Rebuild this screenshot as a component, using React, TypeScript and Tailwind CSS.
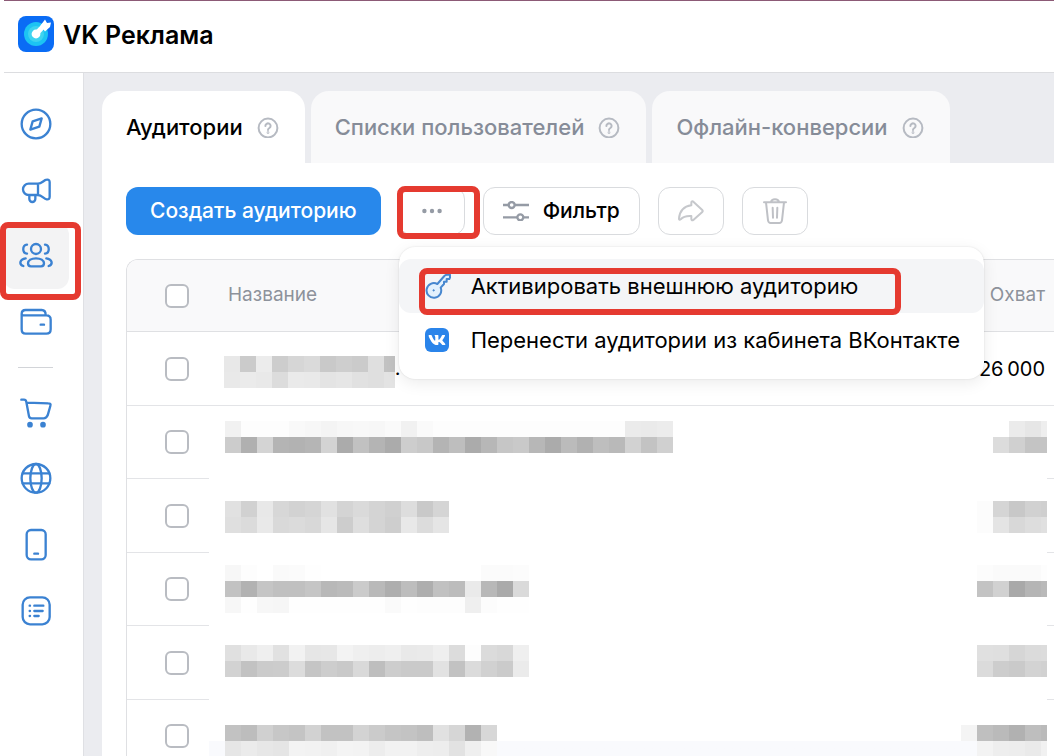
import type { ReactNode } from 'react';
import { clsx } from 'clsx';
import { FaVk } from 'react-icons/fa';

const navPrimary: Array<{ label: string; active?: boolean; icon: ReactNode }> = [
  {
    label: 'Обзор',
    icon: (
      <>
        <circle cx="48" cy="48" r="43" />
        <path d="M65 31l-7 25-27 9 7-25z" />
      </>
    ),
  },
  {
    label: 'Кампании',
    icon: (
      <path d="M54 29H26a17 17 0 0 0 0 34h28M54 29v34M54 29c12 0 17-11 26-12 7-1 9 3 9 8v43c0 6-3 9-9 8-9-1-14-13-26-13M28 63v12a9 9 0 0 0 18 0V63" />
    ),
  },
  {
    label: 'Аудитории',
    active: true,
    icon: (
      <>
        <circle cx="48" cy="27" r="15" />
        <path d="M48 55c14 0 24 6 24 15 0 6-3 9-9 9H33c-6 0-9-3-9-9 0-9 10-15 24-15z" />
        <path d="M21 14C6 16 6 39 21 41M75 14c15 2 15 25 0 27M17 55C-1 58-4 73 10 78M79 55c18 3 21 18 7 23" />
      </>
    ),
  },
  {
    label: 'Бюджет',
    icon: (
      <path d="M5 24v46c0 9 4 13 12 13h62c9 0 13-4 13-13V41c0-9-4-13-13-13H14c-6 0-9-2-9-5 0-7 4-11 12-11h48c7 0 12 4 12 15M62 56h10" />
    ),
  },
];

const navSecondary: typeof navPrimary = [
  {
    label: 'Каталоги',
    icon: (
      <>
        <path d="M4 11h8c5 0 6 2 7 7l8 43c1 5 3 6 8 6h36c6 0 9-2 12-9l8-28c2-6 0-8-6-8L20 20" />
        <circle cx="30" cy="86" r="5" fill="currentColor" />
        <circle cx="69" cy="86" r="5" fill="currentColor" />
      </>
    ),
  },
  {
    label: 'Сайты',
    icon: (
      <>
        <circle cx="48" cy="49" r="43" />
        <ellipse cx="48" cy="49" rx="17" ry="43" />
        <path d="M8 34h80M8 64h80" />
      </>
    ),
  },
  {
    label: 'Приложения',
    icon: (
      <>
        <rect x="20" y="6" width="57" height="88" rx="13" />
        <path d="M43 77h11" />
      </>
    ),
  },
  {
    label: 'Лид-формы',
    icon: (
      <>
        <rect x="8" y="10" width="81" height="81" rx="22" />
        <path d="M29 35h1M29 51h1M29 66h1M43 35h27M43 51h25M43 66h13" />
      </>
    ),
  },
];

const tabs = [
  { title: 'Аудитории', active: true },
  { title: 'Списки пользователей', active: false },
  { title: 'Офлайн-конверсии', active: false },
];

// Redacted cells: every pair is the grey level of one 16px tile, "--" leaves a hole.
const rows: Array<{ pad: string; name: string[]; reach?: string[]; tinted?: boolean }> = [
  {
    pad: 'pt-6',
    name: ['e8 cb ec cd d6 da c9 ce cb df c2', 'e9 eb e9 dc ea e9 e4 e6 e1 df e3'],
  },
  {
    pad: 'pt-[15px]',
    name: [
      'f1 fd fd fd f9 f7 f4 f7 f8 f7 fa f1 fa fd fd fd fd fd fd fd fd fd fd fd fd eb ea ec',
      'cc b0 d4 b4 b2 b5 d3 ab c1 b4 ab cd c8 b4 be ab b7 c6 c9 b7 ab bb b1 be b9 d2 c3 d0',
    ],
    reach: ['-- -- eb e6 ee', '-- dc d0 c4 c4'],
  },
  {
    pad: 'pt-[22px]',
    name: [
      'e1 d1 e8 d7 d2 d5 e1 d4 da d4 d0 dd c9 d5',
      'df db e9 d9 db d8 e6 cd de d4 ce e8 dc e5',
    ],
    reach: ['fc d5 c8 d1 cf', 'fc e4 d8 dd e0'],
  },
  {
    pad: 'pt-3',
    name: [
      'f7 fd -- fa fb fe -- -- -- -- -- -- -- -- -- -- fb fb fc',
      'c2 b2 c5 c0 c0 c5 b8 bb cb b9 ae bd ae c1 bc ea b8 aa da',
      'f7 fe f7 f6 fe fe fe fe fe fe fa fe fd fd fd ef fc fe fe',
    ],
    reach: ['fc fa fa fa fd', 'c3 d1 a9 b5 b9'],
  },
  {
    pad: 'pt-[19px]',
    name: [
      'e0 e9 ef e1 f2 e6 e7 f3 ef ed ef e9 ea ef dc fd db d8 ef',
      'd2 c2 cb cc dc c5 cd c9 d9 be cd ca ca e2 c2 db d1 cb eb',
    ],
    reach: ['e0 df d6 db dc', 'db cd ca d3 d1'],
  },
  {
    pad: 'pt-[25px]',
    tinted: true,
    name: [
      'c2 bd d0 c7 c4 d2 c2 c2 d3 cb c5 c3 be e1 d6 b2 d7',
      'e6 eb e7 e5 f3 f2 f0 f4 f3 ed f2 f2 ee ed e2 ef f8',
    ],
    reach: ['f4 bf ba b1 be ba', '-- f3 ee ed ea f1'],
  },
];

function Mosaic({ tiles, trim = 0 }: { tiles: string[]; trim?: number }) {
  const columns = tiles[0].split(' ').length;
  return (
    <svg
      width={columns * 16 - trim}
      height={tiles.length * 16}
      shapeRendering="crispEdges"
      className="relative shrink-0"
      aria-hidden="true"
    >
      {tiles.map((line, y) =>
        line
          .split(' ')
          .map((level, x) =>
            level === '--' ? null : (
              <rect
                key={`${x}-${y}`}
                x={x * 16}
                y={y * 16}
                width="16"
                height="16"
                fill={`#${level}${level}${level}`}
              />
            ),
          ),
      )}
    </svg>
  );
}

function Highlight({ className }: { className: string }) {
  return (
    <span
      className={clsx(
        'pointer-events-none absolute rounded-lg border-6 border-[#e53a30]',
        className,
      )}
    />
  );
}

function HelpIcon() {
  return (
    <svg width="22" height="22" viewBox="0 0 22 22" fill="none" stroke="#b6bac2" strokeWidth="2" strokeLinecap="round" aria-hidden="true">
      <circle cx="11" cy="12" r="9.4" />
      <path d="M8.4 10a2.6 2.5 0 1 1 4 2c-1 .6-1.4 1-1.4 2" />
      <circle cx="11" cy="16.6" r=".4" fill="#b6bac2" />
    </svg>
  );
}

function NavItem({ item }: { item: (typeof navPrimary)[number] }) {
  return (
    <a
      href="#"
      aria-label={item.label}
      className={clsx(
        'relative flex size-[66px] items-center justify-center rounded-xl text-[#3b82d2]',
        item.active && 'bg-[#f3f3f4]',
      )}
    >
      <svg width="32" height="32" viewBox="0 0 96 96" fill="none" stroke="currentColor" strokeWidth="7" strokeLinecap="round" strokeLinejoin="round" className="overflow-visible">
        {item.icon}
      </svg>
      {item.active && <Highlight className="-top-px -left-[3px] z-10 h-[78px] w-[81px]" />}
    </a>
  );
}

function Checkbox({ label }: { label: string }) {
  return (
    <input
      type="checkbox"
      aria-label={label}
      className="ml-[38px] block size-6 appearance-none rounded-md border-2 border-[#b9bcc2] bg-white"
    />
  );
}

function ActionMenu() {
  return (
    <div className="absolute top-full left-0 z-20 mt-3 w-max rounded-2xl bg-white py-3 shadow-[0_0_2px_rgba(0,0,0,0.12),0_4px_16px_rgba(0,0,0,0.08)]">
      <button
        type="button"
        className="relative flex h-[54px] w-full items-center gap-5 rounded-xl bg-[#f4f5f7] pr-6 pl-[26px] text-[22px] text-black"
      >
        <svg width="26" height="26" viewBox="0 0 78 78" fill="#e3f1fd" stroke="#4787cf" strokeWidth="6" strokeLinejoin="round" aria-hidden="true">
          <path d="M37 33a22 22 0 1 0 10 11L57 33v-7h8v-8h8l2-4V5h-9c-4 0-6 1-8 4z" />
          <circle cx="26" cy="52" r="2" fill="#4787cf" strokeWidth="3" />
        </svg>
        Активировать внешнюю аудиторию
        <Highlight className="top-[9px] right-[83px] -bottom-0.5 left-5" />
      </button>
      <button
        type="button"
        className="flex h-[54px] w-full items-center gap-5 pr-6 pl-[26px] text-[22px] text-black"
      >
        <span className="flex w-[26px]">
          <span className="flex size-6 items-center justify-center rounded-md bg-[#2a84ea] text-white">
            <FaVk size={18} />
          </span>
        </span>
        Перенести аудитории из кабинета ВКонтакте
      </button>
    </div>
  );
}

function Toolbar() {
  const outlined =
    'flex h-12 items-center justify-center rounded-xl border border-[#d9dbde] bg-white';
  return (
    <div className="flex gap-[18px]">
      <button
        type="button"
        className="h-12 rounded-xl bg-[#2888eb] px-6 text-[21px] font-medium whitespace-nowrap text-white"
      >
        Создать аудиторию
      </button>
      <div className="relative">
        <button type="button" aria-label="Ещё" className={clsx(outlined, 'w-[66px]')}>
          <svg width="20" height="6" viewBox="0 0 20 6" fill="#959ba5">
            <circle cx="2.4" cy="3" r="2.2" />
            <circle cx="10" cy="3" r="2.2" />
            <circle cx="17.6" cy="3" r="2.2" />
          </svg>
        </button>
        <Highlight className="-top-px -left-0.5 h-[53px] w-[83px]" />
        <ActionMenu />
      </div>
      <button
        type="button"
        className={clsx(outlined, 'gap-[14px] px-[19px] text-[21px] font-medium text-black')}
      >
        <svg width="26" height="20" viewBox="0 0 78 60" fill="none" stroke="#959ba5" strokeWidth="7" aria-hidden="true">
          <path d="M0 12h17M35 12h43M0 49h43M61 49h17" />
          <circle cx="26" cy="12" r="9" />
          <circle cx="52" cy="49" r="9" />
        </svg>
        Фильтр
      </button>
      <button type="button" aria-label="Поделиться" className={clsx(outlined, 'w-[66px]')}>
        <svg width="26" height="22" viewBox="0 0 78 66" fill="none" stroke="#c6c8cc" strokeWidth="6" strokeLinejoin="round">
          <path d="M40 16V8c0-4 3-5 6-3l26 24c3 3 3 5 0 8L46 60c-3 2-6 1-6-3v-9C25 47 15 50 8 58c-3 3-5 1-5-2C5 33 18 19 40 16z" />
        </svg>
      </button>
      <button type="button" aria-label="Удалить" className={clsx(outlined, 'w-[66px]')}>
        <svg width="24" height="26" viewBox="0 0 72 78" fill="none" stroke="#bfc1c6" strokeWidth="6" strokeLinecap="round" strokeLinejoin="round">
          <path d="M3 13h66M24 12c2-11 22-11 24 0M9 13l6 54c1 5 4 8 8 8h26c4 0 7-3 8-8l6-54M29 29l1 30M43 29l-1 30" />
        </svg>
      </button>
    </div>
  );
}

function AudienceTable() {
  return (
    <table className="mt-6 w-full table-fixed border-separate border-spacing-0 overflow-hidden rounded-tl-xl border-t border-l border-[#dfe0e3]">
      <thead>
        <tr className="h-[72px] bg-[#f9f9fa] text-left text-[19px] text-[#8d929b] *:border-b *:border-[#dfe0e3] *:p-0 *:font-normal">
          <th className="w-[82px]">
            <Checkbox label="Выбрать все" />
          </th>
          <th>
            <span className="pl-[19px]">Название</span>
          </th>
          <th className="w-[110px]">
            <div className="pr-0.5 text-right">Охват</div>
          </th>
          <th className="w-[7px]" />
        </tr>
      </thead>
      <tbody>
        {rows.map((row, index) => (
          <tr
            key={index}
            className={clsx(
              'h-[73px] *:border-[#e3e4e7] *:p-0 odd:h-[74px] first:*:border-b',
              row.tinted &&
                '*:nth-2:bg-linear-to-b *:nth-2:from-transparent *:nth-2:from-[41px] *:nth-2:to-[#f9fafd] *:nth-2:to-[41px] *:nth-3:bg-linear-to-b *:nth-3:from-transparent *:nth-3:from-[41px] *:nth-3:to-[#f9fafd] *:nth-3:to-[41px]',
            )}
          >
            <td className="border-b">
              <Checkbox label={`Выбрать аудиторию ${index + 1}`} />
            </td>
            <td className="align-top">
              <div className={clsx('flex pl-4', index === 0 && '-ml-px', row.pad)}>
                <Mosaic tiles={row.name} trim={index === 0 ? 5 : 0} />
                {index === 0 && <span className="-ml-3 text-xl leading-6">п.</span>}
              </div>
            </td>
            <td className="align-top text-xl">
              {row.reach ? (
                <div className={clsx('flex justify-end', row.pad)}>
                  <Mosaic tiles={row.reach} trim={10} />
                </div>
              ) : (
                <div className="pt-[23px] pr-0.5 text-right leading-7">26{'\u2009'}000</div>
              )}
            </td>
            <td className="border-b" />
          </tr>
        ))}
      </tbody>
    </table>
  );
}

export default function App() {
  return (
    <div className="flex h-screen flex-col overflow-hidden bg-white font-[Inter,'Noto_Sans',sans-serif] text-black">
      <header className="ml-1 flex h-[73px] shrink-0 items-start gap-[9px] border-t border-b border-t-[#8c5a76] border-b-[#dcdde0] pt-[15px] pl-[14px]">
        <svg width="36" height="36" viewBox="0 0 36 36" aria-hidden="true">
          <rect width="36" height="36" rx="8" fill="#0a6cf5" />
          <circle cx="18" cy="18" r="12" fill="#1cc4f3" />
          <circle cx="18" cy="18" r="8" fill="#5fe3ee" opacity=".5" />
          <path d="M18 18L27 8.500" stroke="#fff" strokeWidth="5" />
          <path d="M22.500 9.500l4.500-6 2 3.500 4-.500-1 4.500-5 4.500z" fill="#fff" />
          <circle cx="18" cy="18" r="4.400" fill="#fff" />
        </svg>
        <span className="text-[25px] leading-[38px] font-semibold">VK Реклама</span>
      </header>

      <div className="flex min-h-0 flex-1">
        <nav className="w-[84px] shrink-0 border-r border-[#dfe0e4] pt-[18px] pl-[3px]">
          {navPrimary.map((item) => (
            <NavItem key={item.label} item={item} />
          ))}
          <hr className="mt-3 mb-[11px] ml-[15px] w-[35px] border-[#d2d4d8]" />
          {navSecondary.map((item) => (
            <NavItem key={item.label} item={item} />
          ))}
        </nav>

        <main className="flex min-w-0 flex-1 flex-col bg-[#ebecf0] pt-[18px] pl-[18px]">
          <div className="flex gap-1.5" role="tablist">
            {tabs.map((tab) => (
              <button
                key={tab.title}
                type="button"
                role="tab"
                aria-selected={tab.active}
                className={clsx(
                  'flex h-[72px] items-center gap-[14px] rounded-t-[18px] pr-[26px] pl-6 text-[22px] font-medium whitespace-nowrap',
                  tab.active ? 'bg-white text-black' : 'bg-[#f9f9fa] text-[#868c98]',
                )}
              >
                {tab.title}
                <HelpIcon />
              </button>
            ))}
          </div>
          <section className="flex-1 bg-white pt-6 pl-6">
            <Toolbar />
            <AudienceTable />
          </section>
        </main>
      </div>
    </div>
  );
}
